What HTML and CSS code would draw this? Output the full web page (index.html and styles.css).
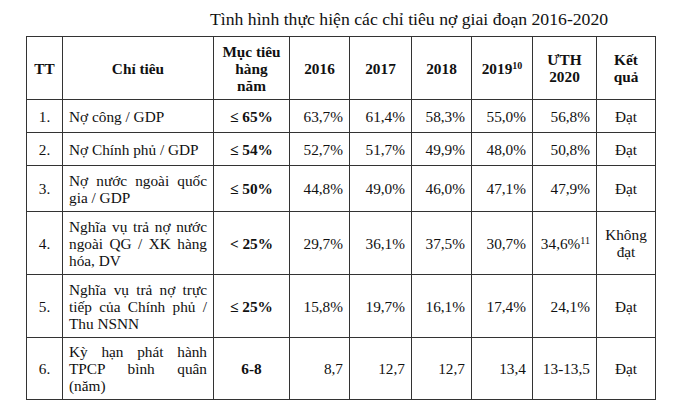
FILE: index.html
```html
<!DOCTYPE html>
<html lang="vi">
<head>
<meta charset="utf-8">
<title>Tình hình thực hiện các chỉ tiêu nợ giai đoạn 2016-2020</title>
<link rel="stylesheet" href="styles.css">
</head>
<body>
<div class="page">
  <div class="title">Tình hình thực hiện các chỉ tiêu nợ giai đoạn 2016-2020</div>
  <table class="debt">
    <colgroup>
      <col class="c-tt"><col class="c-name"><col class="c-target"><col class="c-y"><col class="c-y2"><col class="c-y"><col class="c-y3"><col class="c-uth"><col class="c-res">
    </colgroup>
    <thead>
      <tr class="r-head">
        <th>TT</th>
        <th>Chỉ tiêu</th>
        <th>Mục tiêu<br>hàng<br>năm</th>
        <th>2016</th>
        <th>2017</th>
        <th>2018</th>
        <th>2019<sup>10</sup></th>
        <th>ƯTH<br>2020</th>
        <th>Kết<br>quả</th>
      </tr>
    </thead>
    <tbody>
      <tr class="r-1">
        <td class="tt">1.</td>
        <td class="name">Nợ công / GDP</td>
        <td class="target">≤ 65%</td>
        <td class="num">63,7%</td>
        <td class="num">61,4%</td>
        <td class="num">58,3%</td>
        <td class="num">55,0%</td>
        <td class="num">56,8%</td>
        <td class="res">Đạt</td>
      </tr>
      <tr class="r-1">
        <td class="tt">2.</td>
        <td class="name">Nợ Chính phủ / GDP</td>
        <td class="target">≤ 54%</td>
        <td class="num">52,7%</td>
        <td class="num">51,7%</td>
        <td class="num">49,9%</td>
        <td class="num">48,0%</td>
        <td class="num">50,8%</td>
        <td class="res">Đạt</td>
      </tr>
      <tr class="r-2">
        <td class="tt">3.</td>
        <td class="name">Nợ nước ngoài quốc gia / GDP</td>
        <td class="target">≤ 50%</td>
        <td class="num">44,8%</td>
        <td class="num">49,0%</td>
        <td class="num">46,0%</td>
        <td class="num">47,1%</td>
        <td class="num">47,9%</td>
        <td class="res">Đạt</td>
      </tr>
      <tr class="r-3">
        <td class="tt">4.</td>
        <td class="name">Nghĩa vụ trả nợ nước ngoài QG / XK hàng hóa, DV</td>
        <td class="target">&lt; 25%</td>
        <td class="num">29,7%</td>
        <td class="num">36,1%</td>
        <td class="num">37,5%</td>
        <td class="num">30,7%</td>
        <td class="num">34,6%<sup>11</sup></td>
        <td class="res">Không đạt</td>
      </tr>
      <tr class="r-3">
        <td class="tt">5.</td>
        <td class="name">Nghĩa vụ trả nợ trực tiếp của Chính phủ / Thu NSNN</td>
        <td class="target">≤ 25%</td>
        <td class="num">15,8%</td>
        <td class="num">19,7%</td>
        <td class="num">16,1%</td>
        <td class="num">17,4%</td>
        <td class="num">24,1%</td>
        <td class="res">Đạt</td>
      </tr>
      <tr class="r-3b">
        <td class="tt">6.</td>
        <td class="name">Kỳ hạn phát hành TPCP bình quân (năm)</td>
        <td class="target">6-8</td>
        <td class="num">8,7</td>
        <td class="num">12,7</td>
        <td class="num">12,7</td>
        <td class="num">13,4</td>
        <td class="num">13-13,5</td>
        <td class="res">Đạt</td>
      </tr>
    </tbody>
  </table>
</div>
</body>
</html>
```

FILE: styles.css
```css
html, body {
  margin: 0;
  padding: 0;
  background: #ffffff;
}

body,
.title,
.debt,
.debt th,
.debt td,
.debt sup {
  font-family: "Liberation Serif", "Times New Roman", serif;
}

body {
  color: #111111;
}

.page {
  width: 680px;
  height: 407px;
  overflow: hidden;
}

.title {
  font-size: 17.7px;
  line-height: 20px;
  padding: 9px 0 0 210px;
  height: 27px;
  white-space: nowrap;
}

.debt {
  margin-left: 26px;
  border-collapse: collapse;
  table-layout: fixed;
  width: 630px;
  font-size: 15.3px;
  line-height: 17px;
}

.c-tt { width: 36px; }
.c-name { width: 151px; }
.c-target { width: 76px; }
.c-y { width: 60px; }
.c-y2 { width: 62px; }
.c-y3 { width: 61px; }
.c-uth { width: 64px; }
.c-res { width: 59px; }

.debt th,
.debt td {
  border: 1px solid #333333;
  padding: 0 6px;
  vertical-align: middle;
  font-size: 15.3px;
}

.debt th {
  font-weight: bold;
  text-align: center;
}

.r-head { height: 63px; }
.r-1 { height: 33px; }
.r-2 { height: 46px; }
.r-3 { height: 63px; }
.r-3b { height: 62px; }

.tt { text-align: center; }

.name {
  text-align: justify;
}

.target {
  text-align: center;
  font-weight: bold;
}

.num {
  text-align: right;
  padding-right: 7px;
}

.res { text-align: center; }

.debt sup {
  font-size: 10px;
  line-height: 0;
  vertical-align: 5px;
}
```
